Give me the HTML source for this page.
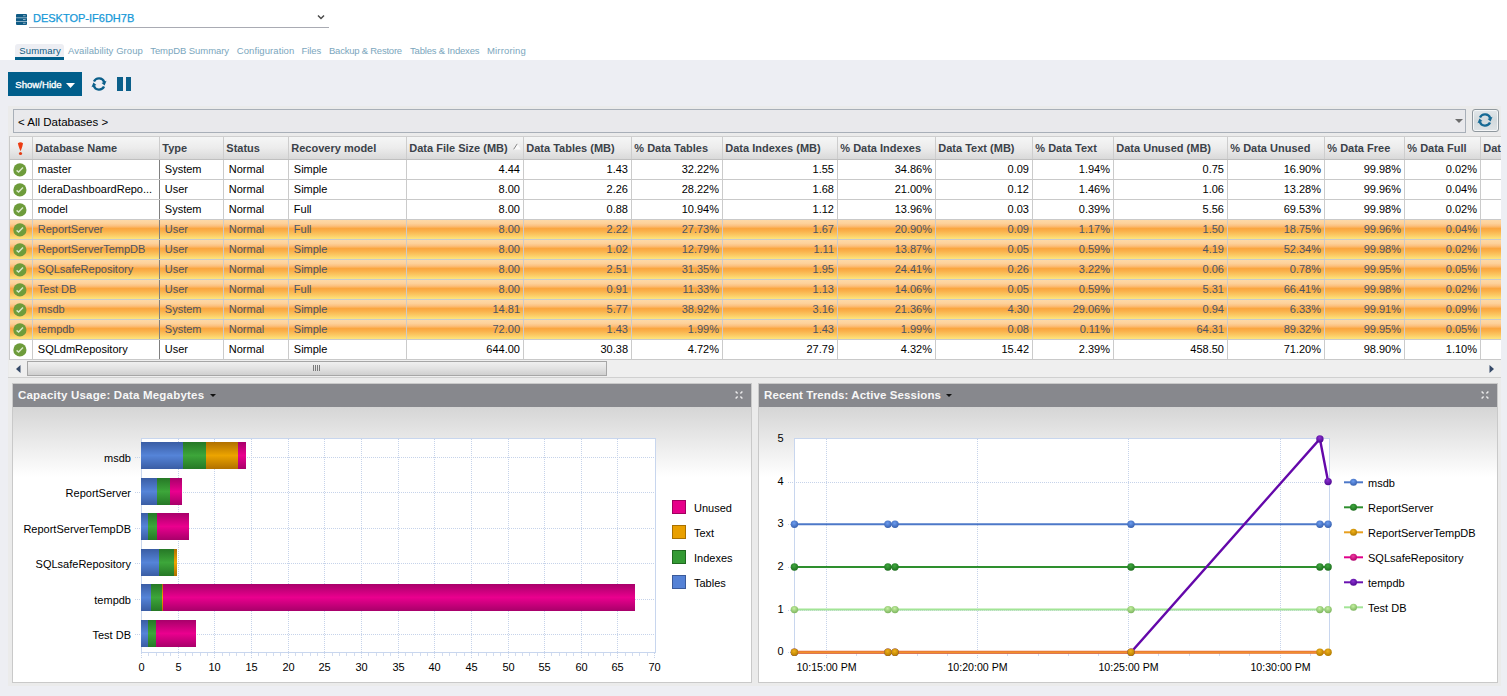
<!DOCTYPE html>
<html><head><meta charset="utf-8"><style>
*{box-sizing:border-box}
body{margin:0;width:1507px;height:696px;overflow:hidden;position:relative;background:#edeef3;font-family:"Liberation Sans",sans-serif;}
.ab{position:absolute}
.t{position:absolute;white-space:nowrap}
.tab{position:absolute;top:42.5px;font-size:9.5px;line-height:16px;color:#7ba6bd;white-space:nowrap}
.hd{position:absolute;top:137px;height:22px;line-height:22px;font-weight:bold;font-size:11px;color:#3b4249;padding-left:2.3px;white-space:nowrap;overflow:hidden}
.c{position:absolute;height:19px;line-height:19px;font-size:11px;color:#000;white-space:nowrap;overflow:hidden}
.r{text-align:right;padding-right:3px}
.l{padding-left:4.8px}
</style></head><body>

<div class="ab" style="left:0;top:0;width:1507px;height:60px;background:#fff"></div>
<svg class="ab" style="left:16px;top:14px" width="11" height="11" viewBox="0 0 11 11">
<rect x="0" y="0" width="11" height="11" rx="1" fill="#0f5b85"/>
<rect x="0" y="3.4" width="11" height="0.8" fill="#a9c4d4"/>
<rect x="0" y="7.2" width="11" height="0.8" fill="#a9c4d4"/>
<rect x="7" y="1.2" width="2.6" height="1" fill="#8fb0c4"/>
<rect x="7" y="5" width="2.6" height="1" fill="#8fb0c4"/>
<rect x="7" y="8.8" width="2.6" height="1" fill="#8fb0c4"/>
</svg>
<div class="t" style="left:33px;top:11px;font-size:11px;line-height:14px;color:#1799d8;-webkit-text-stroke:0.25px #1799d8">DESKTOP-IF6DH7B</div>
<div class="ab" style="left:29px;top:27px;width:300px;height:1px;background:#a9abb3"></div>
<svg class="ab" style="left:317px;top:14px" width="8" height="7" viewBox="0 0 8 7"><path d="M1 1.5 L4 4.5 L7 1.5" stroke="#4a4a4a" stroke-width="1.5" fill="none"/></svg>
<div class="ab" style="left:15px;top:44px;width:49px;height:16px;background:#edeef3;border-radius:3px 3px 0 0"></div>
<div class="ab" style="left:15px;top:57px;width:49px;height:3px;background:#005e8a"></div>
<div class="tab" style="left:19.3px;color:#105a80;letter-spacing:0.12px">Summary</div>
<div class="tab" style="left:68px;color:#7ba6bd;letter-spacing:0.06px">Availability Group</div>
<div class="tab" style="left:150.2px;color:#7ba6bd;letter-spacing:-0.06px">TempDB Summary</div>
<div class="tab" style="left:236.8px;color:#7ba6bd;letter-spacing:0.08px">Configuration</div>
<div class="tab" style="left:301.5px;color:#7ba6bd;letter-spacing:-0.1px">Files</div>
<div class="tab" style="left:329px;color:#7ba6bd;letter-spacing:-0.23px">Backup &amp; Restore</div>
<div class="tab" style="left:410px;color:#7ba6bd;letter-spacing:-0.19px">Tables &amp; Indexes</div>
<div class="tab" style="left:487px;color:#7ba6bd;letter-spacing:0.15px">Mirroring</div>
<div class="ab" style="left:8px;top:72px;width:74px;height:24px;background:#005e8b"></div>
<div class="t" style="left:15.3px;top:77.5px;font-size:9.6px;line-height:14px;color:#fff;-webkit-text-stroke:0.35px #fff">Show/Hide</div>
<svg class="ab" style="left:66px;top:83px" width="9" height="5" viewBox="0 0 9 5"><path d="M0 0 L9 0 L4.5 5 Z" fill="#fff"/></svg>
<svg class="ab" style="left:91.3px;top:75.8px" width="16" height="16" viewBox="0 0 16 16" overflow="visible">
<path d="M2.97 5.55 A5.6 5.6 0 0 1 13.26 6.08" stroke="#0b5f8a" stroke-width="2.3" fill="none"/>
<path d="M13.03 10.45 A5.6 5.6 0 0 1 2.74 9.92" stroke="#0b5f8a" stroke-width="2.3" fill="none"/>
<path d="M10.6 6.9 L15.5 4.7 L13.6 9.5 Z" fill="#0b5f8a"/>
<path d="M5.4 9.1 L0.5 11.3 L2.4 6.5 Z" fill="#0b5f8a"/>
</svg>
<div class="ab" style="left:117.1px;top:77px;width:5.6px;height:14px;background:#0b5f8a"></div>
<div class="ab" style="left:125.8px;top:77px;width:5.5px;height:14px;background:#0b5f8a"></div>
<div class="ab" style="left:8px;top:106px;width:1493px;height:580px;background:#ebebeb"></div>
<div class="ab" style="left:13px;top:109px;width:1453px;height:24px;background:#e9e9ec;border:1px solid #a8afb8"></div>
<div class="t" style="left:18px;top:114.5px;font-size:11.5px;line-height:15px;color:#000">&lt; All Databases &gt;</div>
<svg class="ab" style="left:1455px;top:119px" width="8" height="4" viewBox="0 0 8 4"><path d="M0 0 L8 0 L4 4 Z" fill="#6d6d6d"/></svg>
<div class="ab" style="left:1472px;top:109px;width:27px;height:23px;border:1px solid #8f989e;border-radius:3px;background:linear-gradient(#e2e7ea,#d3dadd 50%,#dfe4e7);box-shadow:inset 0 0 0 1px #f4f6f7"></div>
<svg class="ab" style="left:1477px;top:112px" width="16" height="16" viewBox="0 0 16 16" overflow="visible">
<path d="M2.97 5.55 A5.6 5.6 0 0 1 13.26 6.08" stroke="#166a95" stroke-width="2.3" fill="none"/>
<path d="M13.03 10.45 A5.6 5.6 0 0 1 2.74 9.92" stroke="#166a95" stroke-width="2.3" fill="none"/>
<path d="M10.6 6.9 L15.5 4.7 L13.6 9.5 Z" fill="#166a95"/>
<path d="M5.4 9.1 L0.5 11.3 L2.4 6.5 Z" fill="#166a95"/>
</svg>
<div class="ab" style="left:9px;top:136px;width:1492px;height:224px;overflow:hidden">
<div class="ab" style="left:0;top:0;width:1492px;height:1px;background:#cfcfcf"></div>
<div class="ab" style="left:0;top:1px;width:1492px;height:22px;background:linear-gradient(#f5f6f6,#ececec 50%,#d9d9d9)"></div>
<div class="ab" style="left:0;top:23px;width:1492px;height:1px;background:#bfbfbf"></div>
<div class="ab" style="left:23px;top:1px;width:1px;height:22px;background:#cdcdcd"></div>
<div class="hd" style="left:24px;top:1px;width:126px">Database Name</div>
<div class="ab" style="left:150px;top:1px;width:1px;height:22px;background:#cdcdcd"></div>
<div class="hd" style="left:151px;top:1px;width:63px">Type</div>
<div class="ab" style="left:214px;top:1px;width:1px;height:22px;background:#cdcdcd"></div>
<div class="hd" style="left:215px;top:1px;width:64px">Status</div>
<div class="ab" style="left:279px;top:1px;width:1px;height:22px;background:#cdcdcd"></div>
<div class="hd" style="left:280px;top:1px;width:117px">Recovery model</div>
<div class="ab" style="left:397px;top:1px;width:1px;height:22px;background:#cdcdcd"></div>
<div class="hd" style="left:398px;top:1px;width:116px">Data File Size (MB)</div>
<div class="ab" style="left:514px;top:1px;width:1px;height:22px;background:#cdcdcd"></div>
<div class="hd" style="left:515px;top:1px;width:107px">Data Tables (MB)</div>
<div class="ab" style="left:622px;top:1px;width:1px;height:22px;background:#cdcdcd"></div>
<div class="hd" style="left:623px;top:1px;width:90px">% Data Tables</div>
<div class="ab" style="left:713px;top:1px;width:1px;height:22px;background:#cdcdcd"></div>
<div class="hd" style="left:714px;top:1px;width:114px">Data Indexes (MB)</div>
<div class="ab" style="left:828px;top:1px;width:1px;height:22px;background:#cdcdcd"></div>
<div class="hd" style="left:829px;top:1px;width:97px">% Data Indexes</div>
<div class="ab" style="left:926px;top:1px;width:1px;height:22px;background:#cdcdcd"></div>
<div class="hd" style="left:927px;top:1px;width:96px">Data Text (MB)</div>
<div class="ab" style="left:1023px;top:1px;width:1px;height:22px;background:#cdcdcd"></div>
<div class="hd" style="left:1024px;top:1px;width:80px">% Data Text</div>
<div class="ab" style="left:1104px;top:1px;width:1px;height:22px;background:#cdcdcd"></div>
<div class="hd" style="left:1105px;top:1px;width:113px">Data Unused (MB)</div>
<div class="ab" style="left:1218px;top:1px;width:1px;height:22px;background:#cdcdcd"></div>
<div class="hd" style="left:1219px;top:1px;width:96px">% Data Unused</div>
<div class="ab" style="left:1315px;top:1px;width:1px;height:22px;background:#cdcdcd"></div>
<div class="hd" style="left:1316px;top:1px;width:79px">% Data Free</div>
<div class="ab" style="left:1395px;top:1px;width:1px;height:22px;background:#cdcdcd"></div>
<div class="hd" style="left:1396px;top:1px;width:75px">% Data Full</div>
<div class="ab" style="left:1471px;top:1px;width:1px;height:22px;background:#cdcdcd"></div>
<div class="hd" style="left:1472px;top:1px;width:119px">Data Text Pages</div>
<div class="ab" style="left:1591px;top:1px;width:1px;height:22px;background:#cdcdcd"></div>
<svg class="ab" style="left:504px;top:6.5px" width="8" height="7" viewBox="0 0 8 7"><path d="M0.5 6.5 L4.2 0.8 L7.8 6.5 Z" fill="#fbfbfb"/><path d="M0.7 6.3 L4.2 0.9" stroke="#7a7a7a" stroke-width="0.9"/></svg>
<svg class="ab" style="left:8px;top:6px" width="7" height="14" viewBox="0 0 7 14">
<path d="M0.9 1.2 Q3.5 -0.6 6 1.2 Q5.8 3.5 3.6 9.3 Q1.2 3.5 0.9 1.2 Z" fill="#ec3c12"/>
<circle cx="3.5" cy="11.5" r="1.6" fill="#e23c14"/></svg>
<div class="ab" style="left:0;top:24px;width:1492px;height:19px;background:#fff"></div>
<div class="ab" style="left:0;top:43px;width:1492px;height:1px;background:#c9c9c9"></div>
<svg class="ab" style="left:3.5px;top:26.5px" width="14" height="14" viewBox="0 0 14 14">
<circle cx="6.9" cy="6.9" r="6.6" fill="#6e9c3b"/><path d="M3.6 7.4 L5.6 9.1 L10 4.6" stroke="#dbe9cd" stroke-width="1.4" fill="none"/></svg>
<div class="c l" style="left:24px;top:24px;width:126px;color:#000">master</div>
<div class="c l" style="left:151px;top:24px;width:63px;color:#000">System</div>
<div class="c l" style="left:215px;top:24px;width:64px;color:#000">Normal</div>
<div class="c l" style="left:280px;top:24px;width:117px;color:#000">Simple</div>
<div class="c r" style="left:398px;top:24px;width:116px;color:#000">4.44</div>
<div class="c r" style="left:515px;top:24px;width:107px;color:#000">1.43</div>
<div class="c r" style="left:623px;top:24px;width:90px;color:#000">32.22%</div>
<div class="c r" style="left:714px;top:24px;width:114px;color:#000">1.55</div>
<div class="c r" style="left:829px;top:24px;width:97px;color:#000">34.86%</div>
<div class="c r" style="left:927px;top:24px;width:96px;color:#000">0.09</div>
<div class="c r" style="left:1024px;top:24px;width:80px;color:#000">1.94%</div>
<div class="c r" style="left:1105px;top:24px;width:113px;color:#000">0.75</div>
<div class="c r" style="left:1219px;top:24px;width:96px;color:#000">16.90%</div>
<div class="c r" style="left:1316px;top:24px;width:79px;color:#000">99.98%</div>
<div class="c r" style="left:1396px;top:24px;width:75px;color:#000">0.02%</div>
<div class="c r" style="left:1472px;top:24px;width:119px;color:#000"></div>
<div class="ab" style="left:23px;top:24px;width:1px;height:19px;background:#cbcbcb"></div>
<div class="ab" style="left:150px;top:24px;width:1px;height:19px;background:#7f7f7f"></div>
<div class="ab" style="left:214px;top:24px;width:1px;height:19px;background:#cbcbcb"></div>
<div class="ab" style="left:279px;top:24px;width:1px;height:19px;background:#cbcbcb"></div>
<div class="ab" style="left:397px;top:24px;width:1px;height:19px;background:#cbcbcb"></div>
<div class="ab" style="left:514px;top:24px;width:1px;height:19px;background:#cbcbcb"></div>
<div class="ab" style="left:622px;top:24px;width:1px;height:19px;background:#cbcbcb"></div>
<div class="ab" style="left:713px;top:24px;width:1px;height:19px;background:#cbcbcb"></div>
<div class="ab" style="left:828px;top:24px;width:1px;height:19px;background:#cbcbcb"></div>
<div class="ab" style="left:926px;top:24px;width:1px;height:19px;background:#cbcbcb"></div>
<div class="ab" style="left:1023px;top:24px;width:1px;height:19px;background:#cbcbcb"></div>
<div class="ab" style="left:1104px;top:24px;width:1px;height:19px;background:#cbcbcb"></div>
<div class="ab" style="left:1218px;top:24px;width:1px;height:19px;background:#cbcbcb"></div>
<div class="ab" style="left:1315px;top:24px;width:1px;height:19px;background:#cbcbcb"></div>
<div class="ab" style="left:1395px;top:24px;width:1px;height:19px;background:#cbcbcb"></div>
<div class="ab" style="left:1471px;top:24px;width:1px;height:19px;background:#cbcbcb"></div>
<div class="ab" style="left:0;top:44px;width:1492px;height:19px;background:#fff"></div>
<div class="ab" style="left:0;top:63px;width:1492px;height:1px;background:#c9c9c9"></div>
<svg class="ab" style="left:3.5px;top:46.5px" width="14" height="14" viewBox="0 0 14 14">
<circle cx="6.9" cy="6.9" r="6.6" fill="#6e9c3b"/><path d="M3.6 7.4 L5.6 9.1 L10 4.6" stroke="#dbe9cd" stroke-width="1.4" fill="none"/></svg>
<div class="c l" style="left:24px;top:44px;width:126px;color:#000">IderaDashboardRepo...</div>
<div class="c l" style="left:151px;top:44px;width:63px;color:#000">User</div>
<div class="c l" style="left:215px;top:44px;width:64px;color:#000">Normal</div>
<div class="c l" style="left:280px;top:44px;width:117px;color:#000">Simple</div>
<div class="c r" style="left:398px;top:44px;width:116px;color:#000">8.00</div>
<div class="c r" style="left:515px;top:44px;width:107px;color:#000">2.26</div>
<div class="c r" style="left:623px;top:44px;width:90px;color:#000">28.22%</div>
<div class="c r" style="left:714px;top:44px;width:114px;color:#000">1.68</div>
<div class="c r" style="left:829px;top:44px;width:97px;color:#000">21.00%</div>
<div class="c r" style="left:927px;top:44px;width:96px;color:#000">0.12</div>
<div class="c r" style="left:1024px;top:44px;width:80px;color:#000">1.46%</div>
<div class="c r" style="left:1105px;top:44px;width:113px;color:#000">1.06</div>
<div class="c r" style="left:1219px;top:44px;width:96px;color:#000">13.28%</div>
<div class="c r" style="left:1316px;top:44px;width:79px;color:#000">99.96%</div>
<div class="c r" style="left:1396px;top:44px;width:75px;color:#000">0.04%</div>
<div class="c r" style="left:1472px;top:44px;width:119px;color:#000"></div>
<div class="ab" style="left:23px;top:44px;width:1px;height:19px;background:#cbcbcb"></div>
<div class="ab" style="left:150px;top:44px;width:1px;height:19px;background:#7f7f7f"></div>
<div class="ab" style="left:214px;top:44px;width:1px;height:19px;background:#cbcbcb"></div>
<div class="ab" style="left:279px;top:44px;width:1px;height:19px;background:#cbcbcb"></div>
<div class="ab" style="left:397px;top:44px;width:1px;height:19px;background:#cbcbcb"></div>
<div class="ab" style="left:514px;top:44px;width:1px;height:19px;background:#cbcbcb"></div>
<div class="ab" style="left:622px;top:44px;width:1px;height:19px;background:#cbcbcb"></div>
<div class="ab" style="left:713px;top:44px;width:1px;height:19px;background:#cbcbcb"></div>
<div class="ab" style="left:828px;top:44px;width:1px;height:19px;background:#cbcbcb"></div>
<div class="ab" style="left:926px;top:44px;width:1px;height:19px;background:#cbcbcb"></div>
<div class="ab" style="left:1023px;top:44px;width:1px;height:19px;background:#cbcbcb"></div>
<div class="ab" style="left:1104px;top:44px;width:1px;height:19px;background:#cbcbcb"></div>
<div class="ab" style="left:1218px;top:44px;width:1px;height:19px;background:#cbcbcb"></div>
<div class="ab" style="left:1315px;top:44px;width:1px;height:19px;background:#cbcbcb"></div>
<div class="ab" style="left:1395px;top:44px;width:1px;height:19px;background:#cbcbcb"></div>
<div class="ab" style="left:1471px;top:44px;width:1px;height:19px;background:#cbcbcb"></div>
<div class="ab" style="left:0;top:64px;width:1492px;height:19px;background:#fff"></div>
<div class="ab" style="left:0;top:83px;width:1492px;height:1px;background:#c9c9c9"></div>
<svg class="ab" style="left:3.5px;top:66.5px" width="14" height="14" viewBox="0 0 14 14">
<circle cx="6.9" cy="6.9" r="6.6" fill="#6e9c3b"/><path d="M3.6 7.4 L5.6 9.1 L10 4.6" stroke="#dbe9cd" stroke-width="1.4" fill="none"/></svg>
<div class="c l" style="left:24px;top:64px;width:126px;color:#000">model</div>
<div class="c l" style="left:151px;top:64px;width:63px;color:#000">System</div>
<div class="c l" style="left:215px;top:64px;width:64px;color:#000">Normal</div>
<div class="c l" style="left:280px;top:64px;width:117px;color:#000">Full</div>
<div class="c r" style="left:398px;top:64px;width:116px;color:#000">8.00</div>
<div class="c r" style="left:515px;top:64px;width:107px;color:#000">0.88</div>
<div class="c r" style="left:623px;top:64px;width:90px;color:#000">10.94%</div>
<div class="c r" style="left:714px;top:64px;width:114px;color:#000">1.12</div>
<div class="c r" style="left:829px;top:64px;width:97px;color:#000">13.96%</div>
<div class="c r" style="left:927px;top:64px;width:96px;color:#000">0.03</div>
<div class="c r" style="left:1024px;top:64px;width:80px;color:#000">0.39%</div>
<div class="c r" style="left:1105px;top:64px;width:113px;color:#000">5.56</div>
<div class="c r" style="left:1219px;top:64px;width:96px;color:#000">69.53%</div>
<div class="c r" style="left:1316px;top:64px;width:79px;color:#000">99.98%</div>
<div class="c r" style="left:1396px;top:64px;width:75px;color:#000">0.02%</div>
<div class="c r" style="left:1472px;top:64px;width:119px;color:#000"></div>
<div class="ab" style="left:23px;top:64px;width:1px;height:19px;background:#cbcbcb"></div>
<div class="ab" style="left:150px;top:64px;width:1px;height:19px;background:#7f7f7f"></div>
<div class="ab" style="left:214px;top:64px;width:1px;height:19px;background:#cbcbcb"></div>
<div class="ab" style="left:279px;top:64px;width:1px;height:19px;background:#cbcbcb"></div>
<div class="ab" style="left:397px;top:64px;width:1px;height:19px;background:#cbcbcb"></div>
<div class="ab" style="left:514px;top:64px;width:1px;height:19px;background:#cbcbcb"></div>
<div class="ab" style="left:622px;top:64px;width:1px;height:19px;background:#cbcbcb"></div>
<div class="ab" style="left:713px;top:64px;width:1px;height:19px;background:#cbcbcb"></div>
<div class="ab" style="left:828px;top:64px;width:1px;height:19px;background:#cbcbcb"></div>
<div class="ab" style="left:926px;top:64px;width:1px;height:19px;background:#cbcbcb"></div>
<div class="ab" style="left:1023px;top:64px;width:1px;height:19px;background:#cbcbcb"></div>
<div class="ab" style="left:1104px;top:64px;width:1px;height:19px;background:#cbcbcb"></div>
<div class="ab" style="left:1218px;top:64px;width:1px;height:19px;background:#cbcbcb"></div>
<div class="ab" style="left:1315px;top:64px;width:1px;height:19px;background:#cbcbcb"></div>
<div class="ab" style="left:1395px;top:64px;width:1px;height:19px;background:#cbcbcb"></div>
<div class="ab" style="left:1471px;top:64px;width:1px;height:19px;background:#cbcbcb"></div>
<div class="ab" style="left:0;top:84px;width:1492px;height:19px;background:linear-gradient(#fed9a6 0%,#fdd19a 18%,#fcbf7c 32%,#faa640 45%,#fab04a 58%,#fcca64 80%,#fee47c 100%)"></div>
<div class="ab" style="left:0;top:103px;width:1492px;height:1px;background:#c9c9c9"></div>
<svg class="ab" style="left:3.5px;top:86.5px" width="14" height="14" viewBox="0 0 14 14">
<circle cx="6.9" cy="6.9" r="6.6" fill="#6e9c3b"/><path d="M3.6 7.4 L5.6 9.1 L10 4.6" stroke="#dbe9cd" stroke-width="1.4" fill="none"/></svg>
<div class="c l" style="left:24px;top:84px;width:126px;color:#4a5566">ReportServer</div>
<div class="c l" style="left:151px;top:84px;width:63px;color:#4a5566">User</div>
<div class="c l" style="left:215px;top:84px;width:64px;color:#4a5566">Normal</div>
<div class="c l" style="left:280px;top:84px;width:117px;color:#4a5566">Full</div>
<div class="c r" style="left:398px;top:84px;width:116px;color:#4a5566">8.00</div>
<div class="c r" style="left:515px;top:84px;width:107px;color:#4a5566">2.22</div>
<div class="c r" style="left:623px;top:84px;width:90px;color:#4a5566">27.73%</div>
<div class="c r" style="left:714px;top:84px;width:114px;color:#4a5566">1.67</div>
<div class="c r" style="left:829px;top:84px;width:97px;color:#4a5566">20.90%</div>
<div class="c r" style="left:927px;top:84px;width:96px;color:#4a5566">0.09</div>
<div class="c r" style="left:1024px;top:84px;width:80px;color:#4a5566">1.17%</div>
<div class="c r" style="left:1105px;top:84px;width:113px;color:#4a5566">1.50</div>
<div class="c r" style="left:1219px;top:84px;width:96px;color:#4a5566">18.75%</div>
<div class="c r" style="left:1316px;top:84px;width:79px;color:#4a5566">99.96%</div>
<div class="c r" style="left:1396px;top:84px;width:75px;color:#4a5566">0.04%</div>
<div class="c r" style="left:1472px;top:84px;width:119px;color:#4a5566"></div>
<div class="ab" style="left:23px;top:84px;width:1px;height:19px;background:#cbcbcb"></div>
<div class="ab" style="left:150px;top:84px;width:1px;height:19px;background:#7f7f7f"></div>
<div class="ab" style="left:214px;top:84px;width:1px;height:19px;background:#cbcbcb"></div>
<div class="ab" style="left:279px;top:84px;width:1px;height:19px;background:#cbcbcb"></div>
<div class="ab" style="left:397px;top:84px;width:1px;height:19px;background:#cbcbcb"></div>
<div class="ab" style="left:514px;top:84px;width:1px;height:19px;background:#cbcbcb"></div>
<div class="ab" style="left:622px;top:84px;width:1px;height:19px;background:#cbcbcb"></div>
<div class="ab" style="left:713px;top:84px;width:1px;height:19px;background:#cbcbcb"></div>
<div class="ab" style="left:828px;top:84px;width:1px;height:19px;background:#cbcbcb"></div>
<div class="ab" style="left:926px;top:84px;width:1px;height:19px;background:#cbcbcb"></div>
<div class="ab" style="left:1023px;top:84px;width:1px;height:19px;background:#cbcbcb"></div>
<div class="ab" style="left:1104px;top:84px;width:1px;height:19px;background:#cbcbcb"></div>
<div class="ab" style="left:1218px;top:84px;width:1px;height:19px;background:#cbcbcb"></div>
<div class="ab" style="left:1315px;top:84px;width:1px;height:19px;background:#cbcbcb"></div>
<div class="ab" style="left:1395px;top:84px;width:1px;height:19px;background:#cbcbcb"></div>
<div class="ab" style="left:1471px;top:84px;width:1px;height:19px;background:#cbcbcb"></div>
<div class="ab" style="left:0;top:104px;width:1492px;height:19px;background:linear-gradient(#fed9a6 0%,#fdd19a 18%,#fcbf7c 32%,#faa640 45%,#fab04a 58%,#fcca64 80%,#fee47c 100%)"></div>
<div class="ab" style="left:0;top:123px;width:1492px;height:1px;background:#c9c9c9"></div>
<svg class="ab" style="left:3.5px;top:106.5px" width="14" height="14" viewBox="0 0 14 14">
<circle cx="6.9" cy="6.9" r="6.6" fill="#6e9c3b"/><path d="M3.6 7.4 L5.6 9.1 L10 4.6" stroke="#dbe9cd" stroke-width="1.4" fill="none"/></svg>
<div class="c l" style="left:24px;top:104px;width:126px;color:#4a5566">ReportServerTempDB</div>
<div class="c l" style="left:151px;top:104px;width:63px;color:#4a5566">User</div>
<div class="c l" style="left:215px;top:104px;width:64px;color:#4a5566">Normal</div>
<div class="c l" style="left:280px;top:104px;width:117px;color:#4a5566">Simple</div>
<div class="c r" style="left:398px;top:104px;width:116px;color:#4a5566">8.00</div>
<div class="c r" style="left:515px;top:104px;width:107px;color:#4a5566">1.02</div>
<div class="c r" style="left:623px;top:104px;width:90px;color:#4a5566">12.79%</div>
<div class="c r" style="left:714px;top:104px;width:114px;color:#4a5566">1.11</div>
<div class="c r" style="left:829px;top:104px;width:97px;color:#4a5566">13.87%</div>
<div class="c r" style="left:927px;top:104px;width:96px;color:#4a5566">0.05</div>
<div class="c r" style="left:1024px;top:104px;width:80px;color:#4a5566">0.59%</div>
<div class="c r" style="left:1105px;top:104px;width:113px;color:#4a5566">4.19</div>
<div class="c r" style="left:1219px;top:104px;width:96px;color:#4a5566">52.34%</div>
<div class="c r" style="left:1316px;top:104px;width:79px;color:#4a5566">99.98%</div>
<div class="c r" style="left:1396px;top:104px;width:75px;color:#4a5566">0.02%</div>
<div class="c r" style="left:1472px;top:104px;width:119px;color:#4a5566"></div>
<div class="ab" style="left:23px;top:104px;width:1px;height:19px;background:#cbcbcb"></div>
<div class="ab" style="left:150px;top:104px;width:1px;height:19px;background:#7f7f7f"></div>
<div class="ab" style="left:214px;top:104px;width:1px;height:19px;background:#cbcbcb"></div>
<div class="ab" style="left:279px;top:104px;width:1px;height:19px;background:#cbcbcb"></div>
<div class="ab" style="left:397px;top:104px;width:1px;height:19px;background:#cbcbcb"></div>
<div class="ab" style="left:514px;top:104px;width:1px;height:19px;background:#cbcbcb"></div>
<div class="ab" style="left:622px;top:104px;width:1px;height:19px;background:#cbcbcb"></div>
<div class="ab" style="left:713px;top:104px;width:1px;height:19px;background:#cbcbcb"></div>
<div class="ab" style="left:828px;top:104px;width:1px;height:19px;background:#cbcbcb"></div>
<div class="ab" style="left:926px;top:104px;width:1px;height:19px;background:#cbcbcb"></div>
<div class="ab" style="left:1023px;top:104px;width:1px;height:19px;background:#cbcbcb"></div>
<div class="ab" style="left:1104px;top:104px;width:1px;height:19px;background:#cbcbcb"></div>
<div class="ab" style="left:1218px;top:104px;width:1px;height:19px;background:#cbcbcb"></div>
<div class="ab" style="left:1315px;top:104px;width:1px;height:19px;background:#cbcbcb"></div>
<div class="ab" style="left:1395px;top:104px;width:1px;height:19px;background:#cbcbcb"></div>
<div class="ab" style="left:1471px;top:104px;width:1px;height:19px;background:#cbcbcb"></div>
<div class="ab" style="left:0;top:124px;width:1492px;height:19px;background:linear-gradient(#fed9a6 0%,#fdd19a 18%,#fcbf7c 32%,#faa640 45%,#fab04a 58%,#fcca64 80%,#fee47c 100%)"></div>
<div class="ab" style="left:0;top:143px;width:1492px;height:1px;background:#c9c9c9"></div>
<svg class="ab" style="left:3.5px;top:126.5px" width="14" height="14" viewBox="0 0 14 14">
<circle cx="6.9" cy="6.9" r="6.6" fill="#6e9c3b"/><path d="M3.6 7.4 L5.6 9.1 L10 4.6" stroke="#dbe9cd" stroke-width="1.4" fill="none"/></svg>
<div class="c l" style="left:24px;top:124px;width:126px;color:#4a5566">SQLsafeRepository</div>
<div class="c l" style="left:151px;top:124px;width:63px;color:#4a5566">User</div>
<div class="c l" style="left:215px;top:124px;width:64px;color:#4a5566">Normal</div>
<div class="c l" style="left:280px;top:124px;width:117px;color:#4a5566">Simple</div>
<div class="c r" style="left:398px;top:124px;width:116px;color:#4a5566">8.00</div>
<div class="c r" style="left:515px;top:124px;width:107px;color:#4a5566">2.51</div>
<div class="c r" style="left:623px;top:124px;width:90px;color:#4a5566">31.35%</div>
<div class="c r" style="left:714px;top:124px;width:114px;color:#4a5566">1.95</div>
<div class="c r" style="left:829px;top:124px;width:97px;color:#4a5566">24.41%</div>
<div class="c r" style="left:927px;top:124px;width:96px;color:#4a5566">0.26</div>
<div class="c r" style="left:1024px;top:124px;width:80px;color:#4a5566">3.22%</div>
<div class="c r" style="left:1105px;top:124px;width:113px;color:#4a5566">0.06</div>
<div class="c r" style="left:1219px;top:124px;width:96px;color:#4a5566">0.78%</div>
<div class="c r" style="left:1316px;top:124px;width:79px;color:#4a5566">99.95%</div>
<div class="c r" style="left:1396px;top:124px;width:75px;color:#4a5566">0.05%</div>
<div class="c r" style="left:1472px;top:124px;width:119px;color:#4a5566"></div>
<div class="ab" style="left:23px;top:124px;width:1px;height:19px;background:#cbcbcb"></div>
<div class="ab" style="left:150px;top:124px;width:1px;height:19px;background:#7f7f7f"></div>
<div class="ab" style="left:214px;top:124px;width:1px;height:19px;background:#cbcbcb"></div>
<div class="ab" style="left:279px;top:124px;width:1px;height:19px;background:#cbcbcb"></div>
<div class="ab" style="left:397px;top:124px;width:1px;height:19px;background:#cbcbcb"></div>
<div class="ab" style="left:514px;top:124px;width:1px;height:19px;background:#cbcbcb"></div>
<div class="ab" style="left:622px;top:124px;width:1px;height:19px;background:#cbcbcb"></div>
<div class="ab" style="left:713px;top:124px;width:1px;height:19px;background:#cbcbcb"></div>
<div class="ab" style="left:828px;top:124px;width:1px;height:19px;background:#cbcbcb"></div>
<div class="ab" style="left:926px;top:124px;width:1px;height:19px;background:#cbcbcb"></div>
<div class="ab" style="left:1023px;top:124px;width:1px;height:19px;background:#cbcbcb"></div>
<div class="ab" style="left:1104px;top:124px;width:1px;height:19px;background:#cbcbcb"></div>
<div class="ab" style="left:1218px;top:124px;width:1px;height:19px;background:#cbcbcb"></div>
<div class="ab" style="left:1315px;top:124px;width:1px;height:19px;background:#cbcbcb"></div>
<div class="ab" style="left:1395px;top:124px;width:1px;height:19px;background:#cbcbcb"></div>
<div class="ab" style="left:1471px;top:124px;width:1px;height:19px;background:#cbcbcb"></div>
<div class="ab" style="left:0;top:144px;width:1492px;height:19px;background:linear-gradient(#fed9a6 0%,#fdd19a 18%,#fcbf7c 32%,#faa640 45%,#fab04a 58%,#fcca64 80%,#fee47c 100%)"></div>
<div class="ab" style="left:0;top:163px;width:1492px;height:1px;background:#c9c9c9"></div>
<svg class="ab" style="left:3.5px;top:146.5px" width="14" height="14" viewBox="0 0 14 14">
<circle cx="6.9" cy="6.9" r="6.6" fill="#6e9c3b"/><path d="M3.6 7.4 L5.6 9.1 L10 4.6" stroke="#dbe9cd" stroke-width="1.4" fill="none"/></svg>
<div class="c l" style="left:24px;top:144px;width:126px;color:#4a5566">Test DB</div>
<div class="c l" style="left:151px;top:144px;width:63px;color:#4a5566">User</div>
<div class="c l" style="left:215px;top:144px;width:64px;color:#4a5566">Normal</div>
<div class="c l" style="left:280px;top:144px;width:117px;color:#4a5566">Full</div>
<div class="c r" style="left:398px;top:144px;width:116px;color:#4a5566">8.00</div>
<div class="c r" style="left:515px;top:144px;width:107px;color:#4a5566">0.91</div>
<div class="c r" style="left:623px;top:144px;width:90px;color:#4a5566">11.33%</div>
<div class="c r" style="left:714px;top:144px;width:114px;color:#4a5566">1.13</div>
<div class="c r" style="left:829px;top:144px;width:97px;color:#4a5566">14.06%</div>
<div class="c r" style="left:927px;top:144px;width:96px;color:#4a5566">0.05</div>
<div class="c r" style="left:1024px;top:144px;width:80px;color:#4a5566">0.59%</div>
<div class="c r" style="left:1105px;top:144px;width:113px;color:#4a5566">5.31</div>
<div class="c r" style="left:1219px;top:144px;width:96px;color:#4a5566">66.41%</div>
<div class="c r" style="left:1316px;top:144px;width:79px;color:#4a5566">99.98%</div>
<div class="c r" style="left:1396px;top:144px;width:75px;color:#4a5566">0.02%</div>
<div class="c r" style="left:1472px;top:144px;width:119px;color:#4a5566"></div>
<div class="ab" style="left:23px;top:144px;width:1px;height:19px;background:#cbcbcb"></div>
<div class="ab" style="left:150px;top:144px;width:1px;height:19px;background:#7f7f7f"></div>
<div class="ab" style="left:214px;top:144px;width:1px;height:19px;background:#cbcbcb"></div>
<div class="ab" style="left:279px;top:144px;width:1px;height:19px;background:#cbcbcb"></div>
<div class="ab" style="left:397px;top:144px;width:1px;height:19px;background:#cbcbcb"></div>
<div class="ab" style="left:514px;top:144px;width:1px;height:19px;background:#cbcbcb"></div>
<div class="ab" style="left:622px;top:144px;width:1px;height:19px;background:#cbcbcb"></div>
<div class="ab" style="left:713px;top:144px;width:1px;height:19px;background:#cbcbcb"></div>
<div class="ab" style="left:828px;top:144px;width:1px;height:19px;background:#cbcbcb"></div>
<div class="ab" style="left:926px;top:144px;width:1px;height:19px;background:#cbcbcb"></div>
<div class="ab" style="left:1023px;top:144px;width:1px;height:19px;background:#cbcbcb"></div>
<div class="ab" style="left:1104px;top:144px;width:1px;height:19px;background:#cbcbcb"></div>
<div class="ab" style="left:1218px;top:144px;width:1px;height:19px;background:#cbcbcb"></div>
<div class="ab" style="left:1315px;top:144px;width:1px;height:19px;background:#cbcbcb"></div>
<div class="ab" style="left:1395px;top:144px;width:1px;height:19px;background:#cbcbcb"></div>
<div class="ab" style="left:1471px;top:144px;width:1px;height:19px;background:#cbcbcb"></div>
<div class="ab" style="left:0;top:164px;width:1492px;height:19px;background:linear-gradient(#fed9a6 0%,#fdd19a 18%,#fcbf7c 32%,#faa640 45%,#fab04a 58%,#fcca64 80%,#fee47c 100%)"></div>
<div class="ab" style="left:0;top:183px;width:1492px;height:1px;background:#c9c9c9"></div>
<svg class="ab" style="left:3.5px;top:166.5px" width="14" height="14" viewBox="0 0 14 14">
<circle cx="6.9" cy="6.9" r="6.6" fill="#6e9c3b"/><path d="M3.6 7.4 L5.6 9.1 L10 4.6" stroke="#dbe9cd" stroke-width="1.4" fill="none"/></svg>
<div class="c l" style="left:24px;top:164px;width:126px;color:#4a5566">msdb</div>
<div class="c l" style="left:151px;top:164px;width:63px;color:#4a5566">System</div>
<div class="c l" style="left:215px;top:164px;width:64px;color:#4a5566">Normal</div>
<div class="c l" style="left:280px;top:164px;width:117px;color:#4a5566">Simple</div>
<div class="c r" style="left:398px;top:164px;width:116px;color:#4a5566">14.81</div>
<div class="c r" style="left:515px;top:164px;width:107px;color:#4a5566">5.77</div>
<div class="c r" style="left:623px;top:164px;width:90px;color:#4a5566">38.92%</div>
<div class="c r" style="left:714px;top:164px;width:114px;color:#4a5566">3.16</div>
<div class="c r" style="left:829px;top:164px;width:97px;color:#4a5566">21.36%</div>
<div class="c r" style="left:927px;top:164px;width:96px;color:#4a5566">4.30</div>
<div class="c r" style="left:1024px;top:164px;width:80px;color:#4a5566">29.06%</div>
<div class="c r" style="left:1105px;top:164px;width:113px;color:#4a5566">0.94</div>
<div class="c r" style="left:1219px;top:164px;width:96px;color:#4a5566">6.33%</div>
<div class="c r" style="left:1316px;top:164px;width:79px;color:#4a5566">99.91%</div>
<div class="c r" style="left:1396px;top:164px;width:75px;color:#4a5566">0.09%</div>
<div class="c r" style="left:1472px;top:164px;width:119px;color:#4a5566"></div>
<div class="ab" style="left:23px;top:164px;width:1px;height:19px;background:#cbcbcb"></div>
<div class="ab" style="left:150px;top:164px;width:1px;height:19px;background:#7f7f7f"></div>
<div class="ab" style="left:214px;top:164px;width:1px;height:19px;background:#cbcbcb"></div>
<div class="ab" style="left:279px;top:164px;width:1px;height:19px;background:#cbcbcb"></div>
<div class="ab" style="left:397px;top:164px;width:1px;height:19px;background:#cbcbcb"></div>
<div class="ab" style="left:514px;top:164px;width:1px;height:19px;background:#cbcbcb"></div>
<div class="ab" style="left:622px;top:164px;width:1px;height:19px;background:#cbcbcb"></div>
<div class="ab" style="left:713px;top:164px;width:1px;height:19px;background:#cbcbcb"></div>
<div class="ab" style="left:828px;top:164px;width:1px;height:19px;background:#cbcbcb"></div>
<div class="ab" style="left:926px;top:164px;width:1px;height:19px;background:#cbcbcb"></div>
<div class="ab" style="left:1023px;top:164px;width:1px;height:19px;background:#cbcbcb"></div>
<div class="ab" style="left:1104px;top:164px;width:1px;height:19px;background:#cbcbcb"></div>
<div class="ab" style="left:1218px;top:164px;width:1px;height:19px;background:#cbcbcb"></div>
<div class="ab" style="left:1315px;top:164px;width:1px;height:19px;background:#cbcbcb"></div>
<div class="ab" style="left:1395px;top:164px;width:1px;height:19px;background:#cbcbcb"></div>
<div class="ab" style="left:1471px;top:164px;width:1px;height:19px;background:#cbcbcb"></div>
<div class="ab" style="left:0;top:184px;width:1492px;height:19px;background:linear-gradient(#fed9a6 0%,#fdd19a 18%,#fcbf7c 32%,#faa640 45%,#fab04a 58%,#fcca64 80%,#fee47c 100%)"></div>
<div class="ab" style="left:0;top:203px;width:1492px;height:1px;background:#c9c9c9"></div>
<svg class="ab" style="left:3.5px;top:186.5px" width="14" height="14" viewBox="0 0 14 14">
<circle cx="6.9" cy="6.9" r="6.6" fill="#6e9c3b"/><path d="M3.6 7.4 L5.6 9.1 L10 4.6" stroke="#dbe9cd" stroke-width="1.4" fill="none"/></svg>
<div class="c l" style="left:24px;top:184px;width:126px;color:#4a5566">tempdb</div>
<div class="c l" style="left:151px;top:184px;width:63px;color:#4a5566">System</div>
<div class="c l" style="left:215px;top:184px;width:64px;color:#4a5566">Normal</div>
<div class="c l" style="left:280px;top:184px;width:117px;color:#4a5566">Simple</div>
<div class="c r" style="left:398px;top:184px;width:116px;color:#4a5566">72.00</div>
<div class="c r" style="left:515px;top:184px;width:107px;color:#4a5566">1.43</div>
<div class="c r" style="left:623px;top:184px;width:90px;color:#4a5566">1.99%</div>
<div class="c r" style="left:714px;top:184px;width:114px;color:#4a5566">1.43</div>
<div class="c r" style="left:829px;top:184px;width:97px;color:#4a5566">1.99%</div>
<div class="c r" style="left:927px;top:184px;width:96px;color:#4a5566">0.08</div>
<div class="c r" style="left:1024px;top:184px;width:80px;color:#4a5566">0.11%</div>
<div class="c r" style="left:1105px;top:184px;width:113px;color:#4a5566">64.31</div>
<div class="c r" style="left:1219px;top:184px;width:96px;color:#4a5566">89.32%</div>
<div class="c r" style="left:1316px;top:184px;width:79px;color:#4a5566">99.95%</div>
<div class="c r" style="left:1396px;top:184px;width:75px;color:#4a5566">0.05%</div>
<div class="c r" style="left:1472px;top:184px;width:119px;color:#4a5566"></div>
<div class="ab" style="left:23px;top:184px;width:1px;height:19px;background:#cbcbcb"></div>
<div class="ab" style="left:150px;top:184px;width:1px;height:19px;background:#7f7f7f"></div>
<div class="ab" style="left:214px;top:184px;width:1px;height:19px;background:#cbcbcb"></div>
<div class="ab" style="left:279px;top:184px;width:1px;height:19px;background:#cbcbcb"></div>
<div class="ab" style="left:397px;top:184px;width:1px;height:19px;background:#cbcbcb"></div>
<div class="ab" style="left:514px;top:184px;width:1px;height:19px;background:#cbcbcb"></div>
<div class="ab" style="left:622px;top:184px;width:1px;height:19px;background:#cbcbcb"></div>
<div class="ab" style="left:713px;top:184px;width:1px;height:19px;background:#cbcbcb"></div>
<div class="ab" style="left:828px;top:184px;width:1px;height:19px;background:#cbcbcb"></div>
<div class="ab" style="left:926px;top:184px;width:1px;height:19px;background:#cbcbcb"></div>
<div class="ab" style="left:1023px;top:184px;width:1px;height:19px;background:#cbcbcb"></div>
<div class="ab" style="left:1104px;top:184px;width:1px;height:19px;background:#cbcbcb"></div>
<div class="ab" style="left:1218px;top:184px;width:1px;height:19px;background:#cbcbcb"></div>
<div class="ab" style="left:1315px;top:184px;width:1px;height:19px;background:#cbcbcb"></div>
<div class="ab" style="left:1395px;top:184px;width:1px;height:19px;background:#cbcbcb"></div>
<div class="ab" style="left:1471px;top:184px;width:1px;height:19px;background:#cbcbcb"></div>
<div class="ab" style="left:0;top:204px;width:1492px;height:19px;background:#fff"></div>
<div class="ab" style="left:0;top:223px;width:1492px;height:1px;background:#c9c9c9"></div>
<svg class="ab" style="left:3.5px;top:206.5px" width="14" height="14" viewBox="0 0 14 14">
<circle cx="6.9" cy="6.9" r="6.6" fill="#6e9c3b"/><path d="M3.6 7.4 L5.6 9.1 L10 4.6" stroke="#dbe9cd" stroke-width="1.4" fill="none"/></svg>
<div class="c l" style="left:24px;top:204px;width:126px;color:#000">SQLdmRepository</div>
<div class="c l" style="left:151px;top:204px;width:63px;color:#000">User</div>
<div class="c l" style="left:215px;top:204px;width:64px;color:#000">Normal</div>
<div class="c l" style="left:280px;top:204px;width:117px;color:#000">Simple</div>
<div class="c r" style="left:398px;top:204px;width:116px;color:#000">644.00</div>
<div class="c r" style="left:515px;top:204px;width:107px;color:#000">30.38</div>
<div class="c r" style="left:623px;top:204px;width:90px;color:#000">4.72%</div>
<div class="c r" style="left:714px;top:204px;width:114px;color:#000">27.79</div>
<div class="c r" style="left:829px;top:204px;width:97px;color:#000">4.32%</div>
<div class="c r" style="left:927px;top:204px;width:96px;color:#000">15.42</div>
<div class="c r" style="left:1024px;top:204px;width:80px;color:#000">2.39%</div>
<div class="c r" style="left:1105px;top:204px;width:113px;color:#000">458.50</div>
<div class="c r" style="left:1219px;top:204px;width:96px;color:#000">71.20%</div>
<div class="c r" style="left:1316px;top:204px;width:79px;color:#000">98.90%</div>
<div class="c r" style="left:1396px;top:204px;width:75px;color:#000">1.10%</div>
<div class="c r" style="left:1472px;top:204px;width:119px;color:#000"></div>
<div class="ab" style="left:23px;top:204px;width:1px;height:19px;background:#cbcbcb"></div>
<div class="ab" style="left:150px;top:204px;width:1px;height:19px;background:#7f7f7f"></div>
<div class="ab" style="left:214px;top:204px;width:1px;height:19px;background:#cbcbcb"></div>
<div class="ab" style="left:279px;top:204px;width:1px;height:19px;background:#cbcbcb"></div>
<div class="ab" style="left:397px;top:204px;width:1px;height:19px;background:#cbcbcb"></div>
<div class="ab" style="left:514px;top:204px;width:1px;height:19px;background:#cbcbcb"></div>
<div class="ab" style="left:622px;top:204px;width:1px;height:19px;background:#cbcbcb"></div>
<div class="ab" style="left:713px;top:204px;width:1px;height:19px;background:#cbcbcb"></div>
<div class="ab" style="left:828px;top:204px;width:1px;height:19px;background:#cbcbcb"></div>
<div class="ab" style="left:926px;top:204px;width:1px;height:19px;background:#cbcbcb"></div>
<div class="ab" style="left:1023px;top:204px;width:1px;height:19px;background:#cbcbcb"></div>
<div class="ab" style="left:1104px;top:204px;width:1px;height:19px;background:#cbcbcb"></div>
<div class="ab" style="left:1218px;top:204px;width:1px;height:19px;background:#cbcbcb"></div>
<div class="ab" style="left:1315px;top:204px;width:1px;height:19px;background:#cbcbcb"></div>
<div class="ab" style="left:1395px;top:204px;width:1px;height:19px;background:#cbcbcb"></div>
<div class="ab" style="left:1471px;top:204px;width:1px;height:19px;background:#cbcbcb"></div>
<div class="ab" style="left:0;top:0;width:1px;height:224px;background:#c9c9c9"></div>
</div>
<div class="ab" style="left:9px;top:360px;width:1492px;height:17px;background:#efefef"></div>
<svg class="ab" style="left:16px;top:365px" width="5" height="8" viewBox="0 0 5 8"><path d="M4.5 0 L0 4 L4.5 8 Z" fill="#354968"/></svg>
<svg class="ab" style="left:1489px;top:365px" width="5" height="8" viewBox="0 0 5 8"><path d="M0.5 0 L5 4 L0.5 8 Z" fill="#354968"/></svg>
<div class="ab" style="left:27px;top:361px;width:580px;height:15px;border:1px solid #a6a6a6;background:linear-gradient(#f0f0f0,#e2e2e2 50%,#cfcfcf)"></div>
<svg class="ab" style="left:313px;top:365px" width="8" height="6" viewBox="0 0 8 6"><path d="M0.5 0V6M2.5 0V6M4.5 0V6M6.5 0V6" stroke="#7a7a7a" stroke-width="1"/></svg>
<div class="ab" style="left:8px;top:377px;width:1493px;height:1px;background:#d0d0d0"></div>
<div class="ab" style="left:12px;top:383px;width:740px;height:300px;background:#fff;border:1px solid #c9c9c9"></div>
<div class="ab" style="left:13px;top:407px;width:738px;height:70px;background:linear-gradient(#d5d5d5,#fff)"></div>
<div class="ab" style="left:13px;top:384px;width:738px;height:23px;background:#87888d"></div>
<div class="t" style="left:18px;top:387.5px;font-size:11.5px;letter-spacing:0.2px;line-height:15px;font-weight:bold;color:#f7f7f7">Capacity Usage: Data Megabytes</div>
<svg class="ab" style="left:210px;top:394px" width="6" height="3" viewBox="0 0 6 3"><path d="M0 0 L6 0 L3 3 Z" fill="#111"/></svg>
<svg class="ab" style="left:735px;top:391px" width="8" height="8" viewBox="0 0 8 8" stroke="#ececec" stroke-width="1.4" fill="none">
<path d="M0.6 0.6 L2.6 2.6"/><path d="M7.4 0.6 L5.4 2.6"/><path d="M0.6 7.4 L2.6 5.4"/><path d="M7.4 7.4 L5.4 5.4"/></svg>
<div class="ab" style="left:758px;top:383px;width:740px;height:300px;background:#fff;border:1px solid #c9c9c9"></div>
<div class="ab" style="left:759px;top:407px;width:738px;height:70px;background:linear-gradient(#d5d5d5,#fff)"></div>
<div class="ab" style="left:759px;top:384px;width:738px;height:23px;background:#87888d"></div>
<div class="t" style="left:764px;top:387.5px;font-size:11.5px;letter-spacing:0.1px;line-height:15px;font-weight:bold;color:#f7f7f7">Recent Trends: Active Sessions</div>
<svg class="ab" style="left:946px;top:394px" width="6" height="3" viewBox="0 0 6 3"><path d="M0 0 L6 0 L3 3 Z" fill="#111"/></svg>
<svg class="ab" style="left:1481px;top:391px" width="8" height="8" viewBox="0 0 8 8" stroke="#ececec" stroke-width="1.4" fill="none">
<path d="M0.6 0.6 L2.6 2.6"/><path d="M7.4 0.6 L5.4 2.6"/><path d="M0.6 7.4 L2.6 5.4"/><path d="M7.4 7.4 L5.4 5.4"/></svg>
<svg class="ab" style="left:0;top:0" width="1507" height="696" viewBox="0 0 1507 696">
<defs>
<linearGradient id="gb" x1="0" y1="0" x2="0" y2="1"><stop offset="0" stop-color="#3a5da4"/><stop offset="0.5" stop-color="#5584d8"/><stop offset="1" stop-color="#3a5da4"/></linearGradient>
<linearGradient id="gg" x1="0" y1="0" x2="0" y2="1"><stop offset="0" stop-color="#267826"/><stop offset="0.5" stop-color="#3da63a"/><stop offset="1" stop-color="#267826"/></linearGradient>
<linearGradient id="go" x1="0" y1="0" x2="0" y2="1"><stop offset="0" stop-color="#b07000"/><stop offset="0.5" stop-color="#eca400"/><stop offset="1" stop-color="#b07000"/></linearGradient>
<linearGradient id="gm" x1="0" y1="0" x2="0" y2="1"><stop offset="0" stop-color="#a8006a"/><stop offset="0.5" stop-color="#ea008e"/><stop offset="1" stop-color="#a8006a"/></linearGradient>
<radialGradient id="mb" cx="0.45" cy="0.35" r="0.65"><stop offset="0" stop-color="#6b9cf0"/><stop offset="1" stop-color="#3760ae"/></radialGradient>
<radialGradient id="mg" cx="0.45" cy="0.35" r="0.65"><stop offset="0" stop-color="#3fa83f"/><stop offset="1" stop-color="#1e6e1e"/></radialGradient>
<radialGradient id="mo" cx="0.45" cy="0.35" r="0.65"><stop offset="0" stop-color="#f2b21a"/><stop offset="1" stop-color="#b07a00"/></radialGradient>
<radialGradient id="mm" cx="0.45" cy="0.35" r="0.65"><stop offset="0" stop-color="#f03aa0"/><stop offset="1" stop-color="#b0006c"/></radialGradient>
<radialGradient id="mp" cx="0.45" cy="0.35" r="0.65"><stop offset="0" stop-color="#8a30d0"/><stop offset="1" stop-color="#4e0890"/></radialGradient>
<radialGradient id="ml" cx="0.45" cy="0.35" r="0.65"><stop offset="0" stop-color="#c4f0a0"/><stop offset="1" stop-color="#7cb45e"/></radialGradient>
</defs>
<rect x="141.5" y="438.5" width="514" height="214" fill="#fff" stroke="#c8d6ee" stroke-width="1"/>
<line x1="178.5" y1="439" x2="178.5" y2="652" stroke="#c6d3ea" stroke-width="1" stroke-dasharray="1,1"/>
<line x1="214.5" y1="439" x2="214.5" y2="652" stroke="#c6d3ea" stroke-width="1" stroke-dasharray="1,1"/>
<line x1="251.5" y1="439" x2="251.5" y2="652" stroke="#c6d3ea" stroke-width="1" stroke-dasharray="1,1"/>
<line x1="288.5" y1="439" x2="288.5" y2="652" stroke="#c6d3ea" stroke-width="1" stroke-dasharray="1,1"/>
<line x1="324.5" y1="439" x2="324.5" y2="652" stroke="#c6d3ea" stroke-width="1" stroke-dasharray="1,1"/>
<line x1="361.5" y1="439" x2="361.5" y2="652" stroke="#c6d3ea" stroke-width="1" stroke-dasharray="1,1"/>
<line x1="398.5" y1="439" x2="398.5" y2="652" stroke="#c6d3ea" stroke-width="1" stroke-dasharray="1,1"/>
<line x1="434.5" y1="439" x2="434.5" y2="652" stroke="#c6d3ea" stroke-width="1" stroke-dasharray="1,1"/>
<line x1="471.5" y1="439" x2="471.5" y2="652" stroke="#c6d3ea" stroke-width="1" stroke-dasharray="1,1"/>
<line x1="508.5" y1="439" x2="508.5" y2="652" stroke="#c6d3ea" stroke-width="1" stroke-dasharray="1,1"/>
<line x1="544.5" y1="439" x2="544.5" y2="652" stroke="#c6d3ea" stroke-width="1" stroke-dasharray="1,1"/>
<line x1="581.5" y1="439" x2="581.5" y2="652" stroke="#c6d3ea" stroke-width="1" stroke-dasharray="1,1"/>
<line x1="617.5" y1="439" x2="617.5" y2="652" stroke="#c6d3ea" stroke-width="1" stroke-dasharray="1,1"/>
<line x1="135" y1="457.5" x2="655" y2="457.5" stroke="#c6d3ea" stroke-width="1" stroke-dasharray="1,1"/>
<rect x="141" y="442" width="42" height="27" fill="url(#gb)" shape-rendering="crispEdges"/>
<rect x="183" y="442" width="23" height="27" fill="url(#gg)" shape-rendering="crispEdges"/>
<rect x="206" y="442" width="32" height="27" fill="url(#go)" shape-rendering="crispEdges"/>
<rect x="238" y="442" width="8" height="27" fill="url(#gm)" shape-rendering="crispEdges"/>
<text x="131" y="461.5" text-anchor="end" font-size="11" fill="#000" font-family="Liberation Sans">msdb</text>
<line x1="135" y1="492.5" x2="655" y2="492.5" stroke="#c6d3ea" stroke-width="1" stroke-dasharray="1,1"/>
<rect x="141" y="478" width="16" height="27" fill="url(#gb)" shape-rendering="crispEdges"/>
<rect x="157" y="478" width="13" height="27" fill="url(#gg)" shape-rendering="crispEdges"/>
<rect x="170" y="478" width="12" height="27" fill="url(#gm)" shape-rendering="crispEdges"/>
<text x="131" y="496.5" text-anchor="end" font-size="11" fill="#000" font-family="Liberation Sans">ReportServer</text>
<line x1="135" y1="528.5" x2="655" y2="528.5" stroke="#c6d3ea" stroke-width="1" stroke-dasharray="1,1"/>
<rect x="141" y="513" width="7" height="27" fill="url(#gb)" shape-rendering="crispEdges"/>
<rect x="148" y="513" width="9" height="27" fill="url(#gg)" shape-rendering="crispEdges"/>
<rect x="157" y="513" width="32" height="27" fill="url(#gm)" shape-rendering="crispEdges"/>
<text x="131" y="532.5" text-anchor="end" font-size="11" fill="#000" font-family="Liberation Sans">ReportServerTempDB</text>
<line x1="135" y1="563.5" x2="655" y2="563.5" stroke="#c6d3ea" stroke-width="1" stroke-dasharray="1,1"/>
<rect x="141" y="549" width="18" height="27" fill="url(#gb)" shape-rendering="crispEdges"/>
<rect x="159" y="549" width="15" height="27" fill="url(#gg)" shape-rendering="crispEdges"/>
<rect x="174" y="549" width="3" height="27" fill="url(#go)" shape-rendering="crispEdges"/>
<text x="131" y="567.5" text-anchor="end" font-size="11" fill="#000" font-family="Liberation Sans">SQLsafeRepository</text>
<line x1="135" y1="599.5" x2="655" y2="599.5" stroke="#c6d3ea" stroke-width="1" stroke-dasharray="1,1"/>
<rect x="141" y="584" width="10" height="27" fill="url(#gb)" shape-rendering="crispEdges"/>
<rect x="151" y="584" width="11" height="27" fill="url(#gg)" shape-rendering="crispEdges"/>
<rect x="162" y="584" width="1" height="27" fill="url(#go)" shape-rendering="crispEdges"/>
<rect x="163" y="584" width="472" height="27" fill="url(#gm)" shape-rendering="crispEdges"/>
<text x="131" y="603.5" text-anchor="end" font-size="11" fill="#000" font-family="Liberation Sans">tempdb</text>
<line x1="135" y1="634.5" x2="655" y2="634.5" stroke="#c6d3ea" stroke-width="1" stroke-dasharray="1,1"/>
<rect x="141" y="620" width="7" height="27" fill="url(#gb)" shape-rendering="crispEdges"/>
<rect x="148" y="620" width="8" height="27" fill="url(#gg)" shape-rendering="crispEdges"/>
<rect x="156" y="620" width="40" height="27" fill="url(#gm)" shape-rendering="crispEdges"/>
<text x="131" y="638.5" text-anchor="end" font-size="11" fill="#000" font-family="Liberation Sans">Test DB</text>
<line x1="141.5" y1="653" x2="141.5" y2="659" stroke="#c6d3ea" stroke-width="1" stroke-dasharray="1,1"/>
<text x="141.5" y="671" text-anchor="middle" font-size="11" fill="#000" font-family="Liberation Sans">0</text>
<line x1="148.5" y1="653" x2="148.5" y2="656" stroke="#d2dcef" stroke-width="1"/>
<line x1="156.5" y1="653" x2="156.5" y2="656" stroke="#d2dcef" stroke-width="1"/>
<line x1="163.5" y1="653" x2="163.5" y2="656" stroke="#d2dcef" stroke-width="1"/>
<line x1="170.5" y1="653" x2="170.5" y2="656" stroke="#d2dcef" stroke-width="1"/>
<line x1="178.5" y1="653" x2="178.5" y2="659" stroke="#c6d3ea" stroke-width="1" stroke-dasharray="1,1"/>
<text x="178.5" y="671" text-anchor="middle" font-size="11" fill="#000" font-family="Liberation Sans">5</text>
<line x1="185.5" y1="653" x2="185.5" y2="656" stroke="#d2dcef" stroke-width="1"/>
<line x1="192.5" y1="653" x2="192.5" y2="656" stroke="#d2dcef" stroke-width="1"/>
<line x1="200.5" y1="653" x2="200.5" y2="656" stroke="#d2dcef" stroke-width="1"/>
<line x1="207.5" y1="653" x2="207.5" y2="656" stroke="#d2dcef" stroke-width="1"/>
<line x1="214.5" y1="653" x2="214.5" y2="659" stroke="#c6d3ea" stroke-width="1" stroke-dasharray="1,1"/>
<text x="214.5" y="671" text-anchor="middle" font-size="11" fill="#000" font-family="Liberation Sans">10</text>
<line x1="222.5" y1="653" x2="222.5" y2="656" stroke="#d2dcef" stroke-width="1"/>
<line x1="229.5" y1="653" x2="229.5" y2="656" stroke="#d2dcef" stroke-width="1"/>
<line x1="236.5" y1="653" x2="236.5" y2="656" stroke="#d2dcef" stroke-width="1"/>
<line x1="244.5" y1="653" x2="244.5" y2="656" stroke="#d2dcef" stroke-width="1"/>
<line x1="251.5" y1="653" x2="251.5" y2="659" stroke="#c6d3ea" stroke-width="1" stroke-dasharray="1,1"/>
<text x="251.5" y="671" text-anchor="middle" font-size="11" fill="#000" font-family="Liberation Sans">15</text>
<line x1="258.5" y1="653" x2="258.5" y2="656" stroke="#d2dcef" stroke-width="1"/>
<line x1="266.5" y1="653" x2="266.5" y2="656" stroke="#d2dcef" stroke-width="1"/>
<line x1="273.5" y1="653" x2="273.5" y2="656" stroke="#d2dcef" stroke-width="1"/>
<line x1="280.5" y1="653" x2="280.5" y2="656" stroke="#d2dcef" stroke-width="1"/>
<line x1="288.5" y1="653" x2="288.5" y2="659" stroke="#c6d3ea" stroke-width="1" stroke-dasharray="1,1"/>
<text x="288.5" y="671" text-anchor="middle" font-size="11" fill="#000" font-family="Liberation Sans">20</text>
<line x1="295.5" y1="653" x2="295.5" y2="656" stroke="#d2dcef" stroke-width="1"/>
<line x1="302.5" y1="653" x2="302.5" y2="656" stroke="#d2dcef" stroke-width="1"/>
<line x1="310.5" y1="653" x2="310.5" y2="656" stroke="#d2dcef" stroke-width="1"/>
<line x1="317.5" y1="653" x2="317.5" y2="656" stroke="#d2dcef" stroke-width="1"/>
<line x1="324.5" y1="653" x2="324.5" y2="659" stroke="#c6d3ea" stroke-width="1" stroke-dasharray="1,1"/>
<text x="324.5" y="671" text-anchor="middle" font-size="11" fill="#000" font-family="Liberation Sans">25</text>
<line x1="332.5" y1="653" x2="332.5" y2="656" stroke="#d2dcef" stroke-width="1"/>
<line x1="339.5" y1="653" x2="339.5" y2="656" stroke="#d2dcef" stroke-width="1"/>
<line x1="346.5" y1="653" x2="346.5" y2="656" stroke="#d2dcef" stroke-width="1"/>
<line x1="354.5" y1="653" x2="354.5" y2="656" stroke="#d2dcef" stroke-width="1"/>
<line x1="361.5" y1="653" x2="361.5" y2="659" stroke="#c6d3ea" stroke-width="1" stroke-dasharray="1,1"/>
<text x="361.5" y="671" text-anchor="middle" font-size="11" fill="#000" font-family="Liberation Sans">30</text>
<line x1="368.5" y1="653" x2="368.5" y2="656" stroke="#d2dcef" stroke-width="1"/>
<line x1="376.5" y1="653" x2="376.5" y2="656" stroke="#d2dcef" stroke-width="1"/>
<line x1="383.5" y1="653" x2="383.5" y2="656" stroke="#d2dcef" stroke-width="1"/>
<line x1="390.5" y1="653" x2="390.5" y2="656" stroke="#d2dcef" stroke-width="1"/>
<line x1="398.5" y1="653" x2="398.5" y2="659" stroke="#c6d3ea" stroke-width="1" stroke-dasharray="1,1"/>
<text x="398.5" y="671" text-anchor="middle" font-size="11" fill="#000" font-family="Liberation Sans">35</text>
<line x1="405.5" y1="653" x2="405.5" y2="656" stroke="#d2dcef" stroke-width="1"/>
<line x1="412.5" y1="653" x2="412.5" y2="656" stroke="#d2dcef" stroke-width="1"/>
<line x1="420.5" y1="653" x2="420.5" y2="656" stroke="#d2dcef" stroke-width="1"/>
<line x1="427.5" y1="653" x2="427.5" y2="656" stroke="#d2dcef" stroke-width="1"/>
<line x1="434.5" y1="653" x2="434.5" y2="659" stroke="#c6d3ea" stroke-width="1" stroke-dasharray="1,1"/>
<text x="434.5" y="671" text-anchor="middle" font-size="11" fill="#000" font-family="Liberation Sans">40</text>
<line x1="442.5" y1="653" x2="442.5" y2="656" stroke="#d2dcef" stroke-width="1"/>
<line x1="449.5" y1="653" x2="449.5" y2="656" stroke="#d2dcef" stroke-width="1"/>
<line x1="456.5" y1="653" x2="456.5" y2="656" stroke="#d2dcef" stroke-width="1"/>
<line x1="464.5" y1="653" x2="464.5" y2="656" stroke="#d2dcef" stroke-width="1"/>
<line x1="471.5" y1="653" x2="471.5" y2="659" stroke="#c6d3ea" stroke-width="1" stroke-dasharray="1,1"/>
<text x="471.5" y="671" text-anchor="middle" font-size="11" fill="#000" font-family="Liberation Sans">45</text>
<line x1="478.5" y1="653" x2="478.5" y2="656" stroke="#d2dcef" stroke-width="1"/>
<line x1="486.5" y1="653" x2="486.5" y2="656" stroke="#d2dcef" stroke-width="1"/>
<line x1="493.5" y1="653" x2="493.5" y2="656" stroke="#d2dcef" stroke-width="1"/>
<line x1="500.5" y1="653" x2="500.5" y2="656" stroke="#d2dcef" stroke-width="1"/>
<line x1="508.5" y1="653" x2="508.5" y2="659" stroke="#c6d3ea" stroke-width="1" stroke-dasharray="1,1"/>
<text x="508.5" y="671" text-anchor="middle" font-size="11" fill="#000" font-family="Liberation Sans">50</text>
<line x1="515.5" y1="653" x2="515.5" y2="656" stroke="#d2dcef" stroke-width="1"/>
<line x1="522.5" y1="653" x2="522.5" y2="656" stroke="#d2dcef" stroke-width="1"/>
<line x1="529.5" y1="653" x2="529.5" y2="656" stroke="#d2dcef" stroke-width="1"/>
<line x1="537.5" y1="653" x2="537.5" y2="656" stroke="#d2dcef" stroke-width="1"/>
<line x1="544.5" y1="653" x2="544.5" y2="659" stroke="#c6d3ea" stroke-width="1" stroke-dasharray="1,1"/>
<text x="544.5" y="671" text-anchor="middle" font-size="11" fill="#000" font-family="Liberation Sans">55</text>
<line x1="551.5" y1="653" x2="551.5" y2="656" stroke="#d2dcef" stroke-width="1"/>
<line x1="559.5" y1="653" x2="559.5" y2="656" stroke="#d2dcef" stroke-width="1"/>
<line x1="566.5" y1="653" x2="566.5" y2="656" stroke="#d2dcef" stroke-width="1"/>
<line x1="573.5" y1="653" x2="573.5" y2="656" stroke="#d2dcef" stroke-width="1"/>
<line x1="581.5" y1="653" x2="581.5" y2="659" stroke="#c6d3ea" stroke-width="1" stroke-dasharray="1,1"/>
<text x="581.5" y="671" text-anchor="middle" font-size="11" fill="#000" font-family="Liberation Sans">60</text>
<line x1="588.5" y1="653" x2="588.5" y2="656" stroke="#d2dcef" stroke-width="1"/>
<line x1="595.5" y1="653" x2="595.5" y2="656" stroke="#d2dcef" stroke-width="1"/>
<line x1="603.5" y1="653" x2="603.5" y2="656" stroke="#d2dcef" stroke-width="1"/>
<line x1="610.5" y1="653" x2="610.5" y2="656" stroke="#d2dcef" stroke-width="1"/>
<line x1="617.5" y1="653" x2="617.5" y2="659" stroke="#c6d3ea" stroke-width="1" stroke-dasharray="1,1"/>
<text x="617.5" y="671" text-anchor="middle" font-size="11" fill="#000" font-family="Liberation Sans">65</text>
<line x1="625.5" y1="653" x2="625.5" y2="656" stroke="#d2dcef" stroke-width="1"/>
<line x1="632.5" y1="653" x2="632.5" y2="656" stroke="#d2dcef" stroke-width="1"/>
<line x1="639.5" y1="653" x2="639.5" y2="656" stroke="#d2dcef" stroke-width="1"/>
<line x1="647.5" y1="653" x2="647.5" y2="656" stroke="#d2dcef" stroke-width="1"/>
<line x1="654.5" y1="653" x2="654.5" y2="659" stroke="#c6d3ea" stroke-width="1" stroke-dasharray="1,1"/>
<text x="654.5" y="671" text-anchor="middle" font-size="11" fill="#000" font-family="Liberation Sans">70</text>
<rect x="672.5" y="500.5" width="13" height="13" fill="#e6008a" stroke="#a0005f" stroke-width="1"/>
<text x="694" y="511.5" font-size="11" fill="#000" font-family="Liberation Sans">Unused</text>
<rect x="672.5" y="525.5" width="13" height="13" fill="#e9a000" stroke="#a87000" stroke-width="1"/>
<text x="694" y="536.5" font-size="11" fill="#000" font-family="Liberation Sans">Text</text>
<rect x="672.5" y="550.5" width="13" height="13" fill="#349a34" stroke="#206820" stroke-width="1"/>
<text x="694" y="561.5" font-size="11" fill="#000" font-family="Liberation Sans">Indexes</text>
<rect x="672.5" y="575.5" width="13" height="13" fill="#5582d6" stroke="#3a5a9a" stroke-width="1"/>
<text x="694" y="586.5" font-size="11" fill="#000" font-family="Liberation Sans">Tables</text>
<rect x="794.5" y="438.5" width="535" height="214" fill="#fff" stroke="#c8d6ee" stroke-width="1"/>
<line x1="826.5" y1="439" x2="826.5" y2="659" stroke="#c6d3ea" stroke-width="1" stroke-dasharray="1,1"/>
<text x="826.5" y="671" text-anchor="middle" font-size="10.6" fill="#000" font-family="Liberation Sans">10:15:00 PM</text>
<line x1="977.5" y1="439" x2="977.5" y2="659" stroke="#c6d3ea" stroke-width="1" stroke-dasharray="1,1"/>
<text x="977.5" y="671" text-anchor="middle" font-size="10.6" fill="#000" font-family="Liberation Sans">10:20:00 PM</text>
<line x1="1128.5" y1="439" x2="1128.5" y2="659" stroke="#c6d3ea" stroke-width="1" stroke-dasharray="1,1"/>
<text x="1128.5" y="671" text-anchor="middle" font-size="10.6" fill="#000" font-family="Liberation Sans">10:25:00 PM</text>
<line x1="1280.5" y1="439" x2="1280.5" y2="659" stroke="#c6d3ea" stroke-width="1" stroke-dasharray="1,1"/>
<text x="1280.5" y="671" text-anchor="middle" font-size="10.6" fill="#000" font-family="Liberation Sans">10:30:00 PM</text>
<line x1="796.5" y1="653" x2="796.5" y2="656" stroke="#d2dcef" stroke-width="1"/>
<line x1="856.5" y1="653" x2="856.5" y2="656" stroke="#d2dcef" stroke-width="1"/>
<line x1="887.5" y1="653" x2="887.5" y2="656" stroke="#d2dcef" stroke-width="1"/>
<line x1="917.5" y1="653" x2="917.5" y2="656" stroke="#d2dcef" stroke-width="1"/>
<line x1="947.5" y1="653" x2="947.5" y2="656" stroke="#d2dcef" stroke-width="1"/>
<line x1="1007.5" y1="653" x2="1007.5" y2="656" stroke="#d2dcef" stroke-width="1"/>
<line x1="1038.5" y1="653" x2="1038.5" y2="656" stroke="#d2dcef" stroke-width="1"/>
<line x1="1068.5" y1="653" x2="1068.5" y2="656" stroke="#d2dcef" stroke-width="1"/>
<line x1="1098.5" y1="653" x2="1098.5" y2="656" stroke="#d2dcef" stroke-width="1"/>
<line x1="1158.5" y1="653" x2="1158.5" y2="656" stroke="#d2dcef" stroke-width="1"/>
<line x1="1189.5" y1="653" x2="1189.5" y2="656" stroke="#d2dcef" stroke-width="1"/>
<line x1="1219.5" y1="653" x2="1219.5" y2="656" stroke="#d2dcef" stroke-width="1"/>
<line x1="1249.5" y1="653" x2="1249.5" y2="656" stroke="#d2dcef" stroke-width="1"/>
<line x1="1310.5" y1="653" x2="1310.5" y2="656" stroke="#d2dcef" stroke-width="1"/>
<line x1="788" y1="652.5" x2="794" y2="652.5" stroke="#c6d3ea" stroke-width="1" stroke-dasharray="1,1"/>
<text x="783.5" y="654.8" text-anchor="end" font-size="11" fill="#000" font-family="Liberation Sans">0</text>
<line x1="788" y1="610.5" x2="1329" y2="610.5" stroke="#c6d3ea" stroke-width="1" stroke-dasharray="1,1"/>
<text x="783.5" y="612.8" text-anchor="end" font-size="11" fill="#000" font-family="Liberation Sans">1</text>
<line x1="788" y1="567.5" x2="1329" y2="567.5" stroke="#c6d3ea" stroke-width="1" stroke-dasharray="1,1"/>
<text x="783.5" y="569.8" text-anchor="end" font-size="11" fill="#000" font-family="Liberation Sans">2</text>
<line x1="788" y1="524.5" x2="1329" y2="524.5" stroke="#c6d3ea" stroke-width="1" stroke-dasharray="1,1"/>
<text x="783.5" y="526.8" text-anchor="end" font-size="11" fill="#000" font-family="Liberation Sans">3</text>
<line x1="788" y1="482.5" x2="1329" y2="482.5" stroke="#c6d3ea" stroke-width="1" stroke-dasharray="1,1"/>
<text x="783.5" y="484.8" text-anchor="end" font-size="11" fill="#000" font-family="Liberation Sans">4</text>
<text x="783.5" y="441.8" text-anchor="end" font-size="11" fill="#000" font-family="Liberation Sans">5</text>
<polyline points="794.4,524.3 887.9,524.3 895.0,524.3 1131.0,524.3 1319.9,524.3 1328.1,524.3" fill="none" stroke="#4d78c8" stroke-width="2"/>
<polyline points="794.4,567.0 887.9,567.0 895.0,567.0 1131.0,567.0 1319.9,567.0 1328.1,567.0" fill="none" stroke="#2e8f2e" stroke-width="2"/>
<polyline points="794.4,609.6 887.9,609.6 895.0,609.6 1131.0,609.6 1319.9,609.6 1328.1,609.6" fill="none" stroke="#a2e496" stroke-width="2"/>
<polyline points="794.4,652.3 887.9,652.3 895.0,652.3 1131.0,652.3 1319.9,438.9 1328.1,481.6" fill="none" stroke="#6408aa" stroke-width="2.4"/>
<polyline points="794.4,652.3 887.9,652.3 895.0,652.3 1131.0,652.3 1319.9,652.3 1328.1,652.3" fill="none" stroke="#e4683c" stroke-width="3"/>
<polyline points="794.4,652.3 887.9,652.3 895.0,652.3 1131.0,652.3 1319.9,652.3 1328.1,652.3" fill="none" stroke="#f0902c" stroke-width="1.8"/>
<circle cx="794.4" cy="524.3" r="3.7" fill="url(#mb)"/>
<circle cx="887.9" cy="524.3" r="3.7" fill="url(#mb)"/>
<circle cx="895.0" cy="524.3" r="3.7" fill="url(#mb)"/>
<circle cx="1131.0" cy="524.3" r="3.7" fill="url(#mb)"/>
<circle cx="1319.9" cy="524.3" r="3.7" fill="url(#mb)"/>
<circle cx="1328.1" cy="524.3" r="3.7" fill="url(#mb)"/>
<circle cx="794.4" cy="567.0" r="3.7" fill="url(#mg)"/>
<circle cx="887.9" cy="567.0" r="3.7" fill="url(#mg)"/>
<circle cx="895.0" cy="567.0" r="3.7" fill="url(#mg)"/>
<circle cx="1131.0" cy="567.0" r="3.7" fill="url(#mg)"/>
<circle cx="1319.9" cy="567.0" r="3.7" fill="url(#mg)"/>
<circle cx="1328.1" cy="567.0" r="3.7" fill="url(#mg)"/>
<circle cx="794.4" cy="609.6" r="3.7" fill="url(#ml)"/>
<circle cx="887.9" cy="609.6" r="3.7" fill="url(#ml)"/>
<circle cx="895.0" cy="609.6" r="3.7" fill="url(#ml)"/>
<circle cx="1131.0" cy="609.6" r="3.7" fill="url(#ml)"/>
<circle cx="1319.9" cy="609.6" r="3.7" fill="url(#ml)"/>
<circle cx="1328.1" cy="609.6" r="3.7" fill="url(#ml)"/>
<circle cx="794.4" cy="652.3" r="3.7" fill="url(#mp)"/>
<circle cx="887.9" cy="652.3" r="3.7" fill="url(#mp)"/>
<circle cx="895.0" cy="652.3" r="3.7" fill="url(#mp)"/>
<circle cx="1131.0" cy="652.3" r="3.7" fill="url(#mp)"/>
<circle cx="1319.9" cy="438.9" r="3.7" fill="url(#mp)"/>
<circle cx="1328.1" cy="481.6" r="3.7" fill="url(#mp)"/>
<circle cx="794.4" cy="652.3" r="3.7" fill="url(#mo)"/>
<circle cx="887.9" cy="652.3" r="3.7" fill="url(#mo)"/>
<circle cx="895.0" cy="652.3" r="3.7" fill="url(#mo)"/>
<circle cx="1131.0" cy="652.3" r="3.7" fill="url(#mo)"/>
<circle cx="1319.9" cy="652.3" r="3.7" fill="url(#mo)"/>
<circle cx="1328.1" cy="652.3" r="3.7" fill="url(#mo)"/>
<line x1="1344" y1="482.3" x2="1363" y2="482.3" stroke="#4d78c8" stroke-width="2"/>
<circle cx="1353.5" cy="482.3" r="3.5" fill="url(#mb)"/>
<text x="1368" y="486.8" font-size="11" fill="#000" font-family="Liberation Sans">msdb</text>
<line x1="1344" y1="507.3" x2="1363" y2="507.3" stroke="#2e8f2e" stroke-width="2"/>
<circle cx="1353.5" cy="507.3" r="3.5" fill="url(#mg)"/>
<text x="1368" y="511.8" font-size="11" fill="#000" font-family="Liberation Sans">ReportServer</text>
<line x1="1344" y1="532.3" x2="1363" y2="532.3" stroke="#e8a020" stroke-width="2"/>
<circle cx="1353.5" cy="532.3" r="3.5" fill="url(#mo)"/>
<text x="1368" y="536.8" font-size="11" fill="#000" font-family="Liberation Sans">ReportServerTempDB</text>
<line x1="1344" y1="557.3" x2="1363" y2="557.3" stroke="#e0008a" stroke-width="2"/>
<circle cx="1353.5" cy="557.3" r="3.5" fill="url(#mm)"/>
<text x="1368" y="561.8" font-size="11" fill="#000" font-family="Liberation Sans">SQLsafeRepository</text>
<line x1="1344" y1="582.3" x2="1363" y2="582.3" stroke="#6a12b0" stroke-width="2"/>
<circle cx="1353.5" cy="582.3" r="3.5" fill="url(#mp)"/>
<text x="1368" y="586.8" font-size="11" fill="#000" font-family="Liberation Sans">tempdb</text>
<line x1="1344" y1="607.3" x2="1363" y2="607.3" stroke="#a2e496" stroke-width="2"/>
<circle cx="1353.5" cy="607.3" r="3.5" fill="url(#ml)"/>
<text x="1368" y="611.8" font-size="11" fill="#000" font-family="Liberation Sans">Test DB</text>
</svg>
</body></html>
